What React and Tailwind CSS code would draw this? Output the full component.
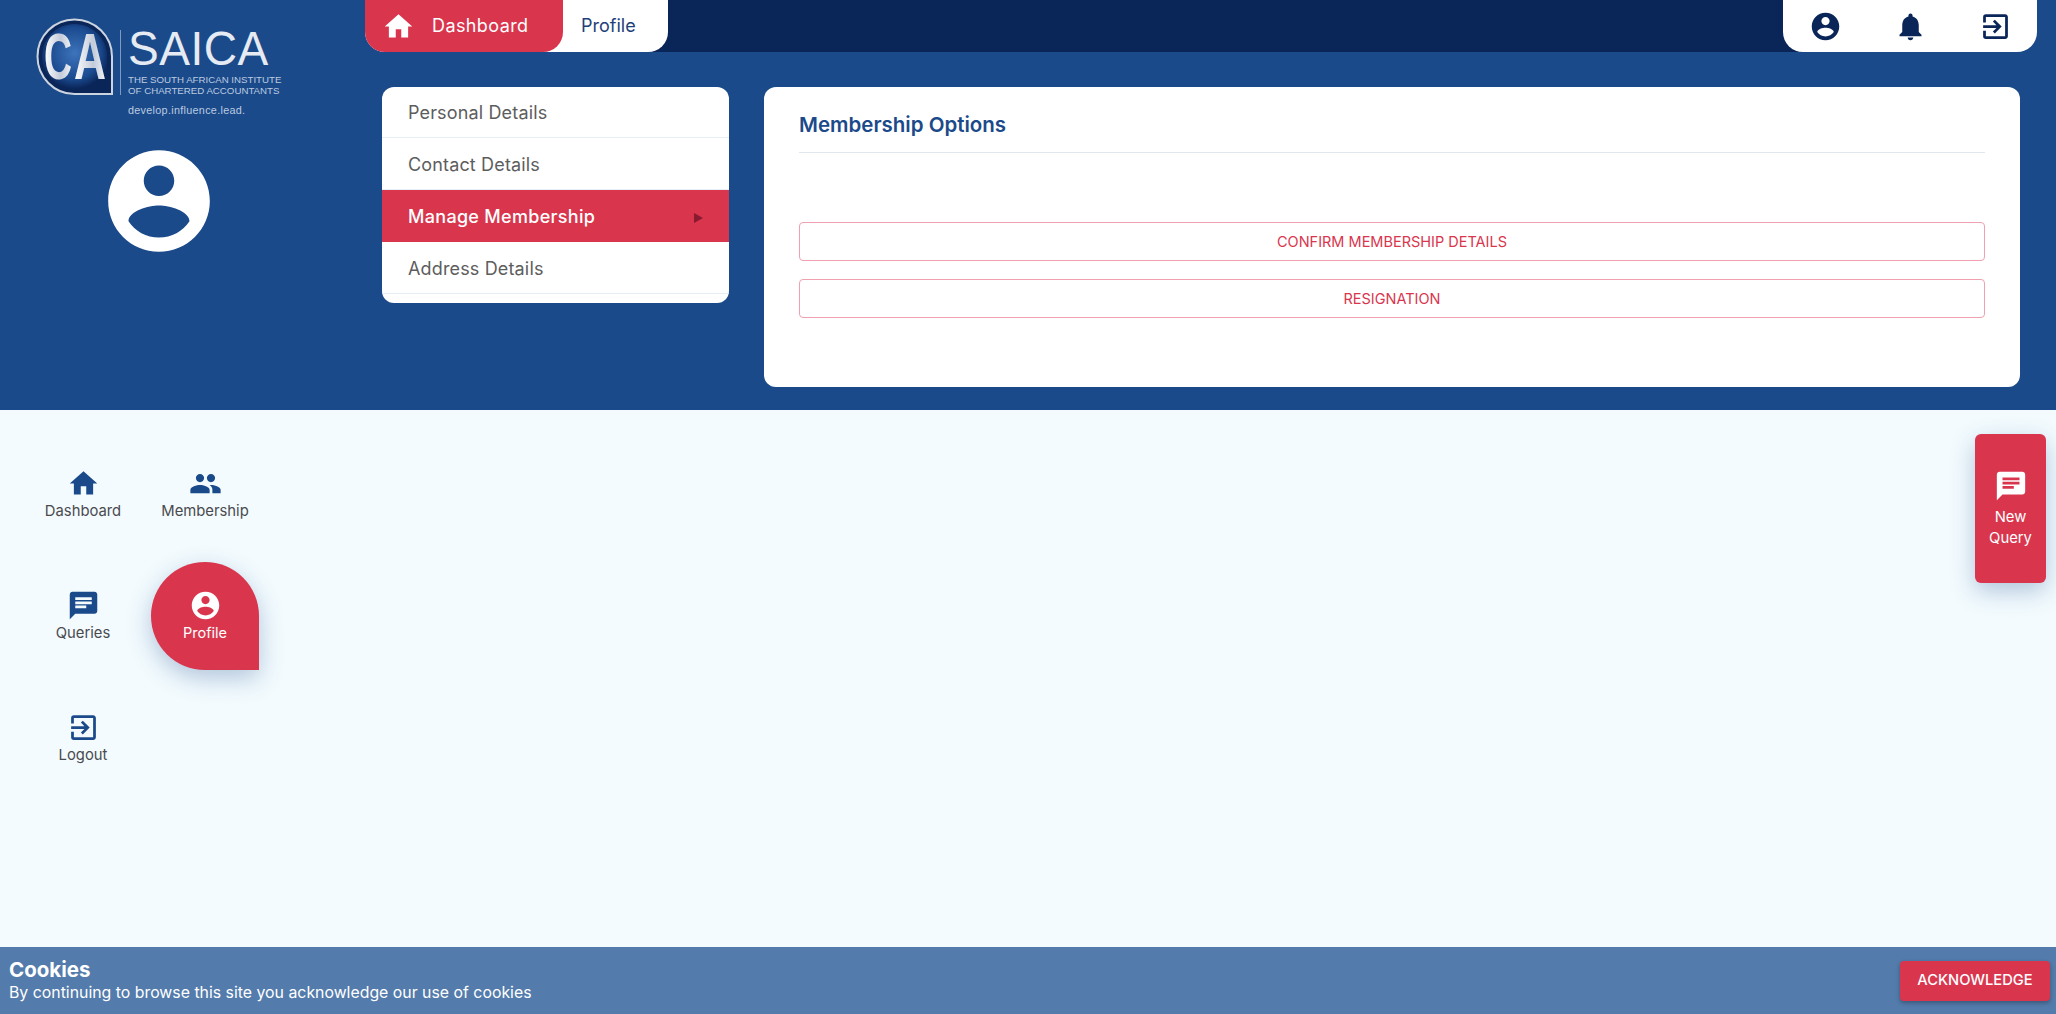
import React from "react";
import { MdHome, MdPeople, MdChat, MdNotifications, MdExitToApp } from "react-icons/md";

function AccountIcon({ size, className }) {
  return (
    <svg width={size} height={size} viewBox="0 0 24 24" fill="currentColor" className={className}>
      <path d="M12 2C6.48 2 2 6.48 2 12s4.48 10 10 10 10-4.48 10-10S17.52 2 12 2zm0 3c1.66 0 3 1.34 3 3s-1.34 3-3 3-3-1.34-3-3 1.34-3 3-3zm0 14.2c-2.5 0-4.71-1.28-6-3.22.03-1.99 4-3.08 6-3.08 1.99 0 5.97 1.09 6 3.08-1.29 1.94-3.5 3.22-6 3.22z" />
    </svg>
  );
}

function Logo() {
  return (
    <div className="flex items-start ml-[36px] pt-[18px] h-[122px]">
      <svg width="78" height="78" viewBox="0 0 78 78" className="shrink-0">
        <defs>
          <radialGradient id="lg" cx="0.5" cy="0.45" r="0.55">
            <stop offset="0" stopColor="#3d74bb" />
            <stop offset="0.72" stopColor="#1b4a8f" />
            <stop offset="1" stopColor="#0a2558" />
          </radialGradient>
          <linearGradient id="ls" x1="0" y1="0" x2="1" y2="0">
            <stop offset="0" stopColor="#ffffff" />
            <stop offset="0.6" stopColor="#c3cbd9" />
            <stop offset="1" stopColor="#f2f4f8" />
          </linearGradient>
        </defs>
        <path d="M38.500 1.500C18 1.500 1.500 18 1.500 38.500S18 76 38.500 76H76V38.500C76 18 59 1.500 38.500 1.500Z" fill="#0a2558" stroke="#ccd4e0" strokeWidth="2" />
        <path d="M38.500 6C20.500 6 6 20.500 6 38.500S20.500 71 38.500 71H71V38.500C71 20.500 56.500 6 38.500 6Z" fill="url(#lg)" />
        <text x="8" y="61" fontFamily="Liberation Sans, sans-serif" fontSize="64" fontWeight="700" fill="url(#ls)" textLength="28" lengthAdjust="spacingAndGlyphs">C</text>
        <text x="38" y="61" fontFamily="Liberation Sans, sans-serif" fontSize="64" fontWeight="700" fill="url(#ls)" textLength="32" lengthAdjust="spacingAndGlyphs">A</text>
      </svg>
      <div className="w-px h-[65px] bg-[#7f9ac2] ml-[6px] mt-[12px] shrink-0" />
      <div className="ml-[7px] mt-[10px] text-[#e6ebf3] font-['Liberation_Sans',sans-serif]">
        <div className="text-[48px] leading-[48px] font-light tracking-[0.5px] h-[40px] mt-[-3px] whitespace-nowrap scale-x-[0.96] origin-left">SAICA</div>
        <div className="text-[9.700px] leading-[10.500px] mt-[10px] whitespace-nowrap text-[#bccbe0]">
          <div>THE SOUTH AFRICAN INSTITUTE</div>
          <div>OF CHARTERED ACCOUNTANTS</div>
        </div>
        <div className="text-[10.800px] leading-[12px] mt-[8px] whitespace-nowrap text-[#bccbe0] tracking-[0.3px]">develop.influence.lead.</div>
      </div>
    </div>
  );
}

function SideMenuRow({ label, active, first }) {
  return active ? (
    <div className="h-[52px] bg-[#d9364e] flex items-center justify-between pl-[26px] pr-[26px] text-white text-[18px] font-medium tracking-[0.3px]">
      <span>{label}</span>
      <span className="w-0 h-0 border-y-[5px] border-y-transparent border-l-[9px] border-l-[#8a1a30] mt-[3px]" />
    </div>
  ) : (
    <div className={first ? "h-[51px] flex items-center pl-[26px] text-[#5d5d5d] text-[18px] tracking-[0.15px] border-b border-[#e8eef5]" : "h-[52px] flex items-center pl-[26px] pt-[1px] text-[#5d5d5d] text-[18px] tracking-[0.15px] border-b border-[#e8eef5]"}>{label}</div>
  );
}

function NavTile({ icon: Icon, label, active }) {
  if (active) {
    return (
      <div className="flex items-center justify-center">
        <div className="w-[108px] h-[108px] rounded-full rounded-br-none bg-[#d9364e] flex flex-col items-center justify-center text-white shadow-[0_8px_24px_rgba(27,74,138,0.3)]">
          <Icon size={33} />
          <span className="text-[14.500px] leading-[20px] mt-[1px]">{label}</span>
        </div>
      </div>
    );
  }
  return (
    <div className="flex flex-col items-center justify-center">
      <Icon size={33} className="text-[#1b4a8a]" />
      <span className="text-[14.800px] leading-[20px] mt-[1px] text-[#4a4a4f]">{label}</span>
    </div>
  );
}

export default function App() {
  return (
    <div className="h-screen w-full overflow-hidden flex flex-col font-['Inter',sans-serif] bg-[#f3fbfe]">
      <header className="h-[410px] bg-[#1b4a8a] flex shrink-0">
        <aside className="w-[365px] shrink-0">
          <Logo />
          <div className="flex justify-start ml-[98px] mt-[18px]">
            <AccountIcon size={122} className="text-white" />
          </div>
        </aside>
        <div className="flex-1 min-w-0 flex flex-col">
          <div className="h-[52px] flex pr-[19px] shrink-0">
            <div className="relative z-10 flex bg-white rounded-b-[20px] h-full">
              <div className="w-[198px] bg-[#d9364e] rounded-b-[20px] flex items-center pl-[17px] text-white text-[18px]">
                <MdHome size={33} />
                <span className="ml-[17px] mb-[2px] tracking-[0.4px]">Dashboard</span>
              </div>
              <div className="w-[105px] flex items-center pb-[2px] pl-[18px] text-[#1f3f7a] text-[18px]">Profile</div>
            </div>
            <div className="flex-1 bg-[#0a2558] -mx-[20px]" />
            <div className="relative z-10 w-[254px] bg-white rounded-b-[20px] flex items-center justify-between pl-[26px] pr-[25px] text-[#0a2558]">
              <AccountIcon size={33} />
              <MdNotifications size={33} />
              <MdExitToApp size={33} />
            </div>
          </div>
          <div className="flex pl-[17px] pr-[36px] pt-[35px] gap-[35px]">
            <div className="w-[347px] h-[216px] bg-white rounded-[12px] overflow-hidden shrink-0">
              <SideMenuRow label="Personal Details" first />
              <SideMenuRow label="Contact Details" />
              <SideMenuRow label="Manage Membership" active />
              <SideMenuRow label="Address Details" />
            </div>
            <div className="flex-1 h-[300px] bg-white rounded-[12px] px-[35px]">
              <div className="h-[66px] pt-[12px] flex items-center border-b border-[#dfe6ee] text-[#1b4a8a] text-[20.500px] font-semibold">Membership Options</div>
              <div className="mt-[69px] flex flex-col gap-[18px]">
                <button className="h-[39px] w-full border border-[#f0a0ae] rounded-[4px] text-[#d9364e] text-[14.500px]">CONFIRM MEMBERSHIP DETAILS</button>
                <button className="h-[39px] w-full border border-[#f0a0ae] rounded-[4px] text-[#d9364e] text-[14.500px]">RESIGNATION</button>
              </div>
            </div>
          </div>
        </div>
      </header>
      <main className="flex-1 min-h-0 relative">
        <div className="grid grid-cols-[122px_122px] auto-rows-[122px] ml-[22px] mt-[23px] w-max">
          <NavTile icon={MdHome} label="Dashboard" />
          <NavTile icon={MdPeople} label="Membership" />
          <NavTile icon={MdChat} label="Queries" />
          <NavTile icon={AccountIcon} label="Profile" active />
          <NavTile icon={MdExitToApp} label="Logout" />
        </div>
        <div className="absolute right-[10px] top-[24px] w-[71px] h-[149px] bg-[#d9364e] rounded-[6px] flex flex-col items-center justify-center text-white shadow-[0_8px_24px_rgba(27,74,138,0.3)]">
          <MdChat size={34} />
          <span className="text-[14.800px] leading-[21px] mt-[4px] text-center">New<br />Query</span>
        </div>
      </main>
      <footer className="h-[67px] shrink-0 bg-[#537bab] flex items-center justify-between pl-[9px] pr-[6px] text-white">
        <div>
          <div className="text-[20.500px] leading-[22px] font-bold">Cookies</div>
          <div className="text-[15.850px] leading-[21px] mt-[1px]">By continuing to browse this site you acknowledge our use of cookies</div>
        </div>
        <button className="w-[150px] h-[40px] bg-[#d9364e] rounded-[4px] text-[14.700px] font-medium shadow-[0_2px_4px_rgba(0,0,0,0.3)]">ACKNOWLEDGE</button>
      </footer>
    </div>
  );
}
